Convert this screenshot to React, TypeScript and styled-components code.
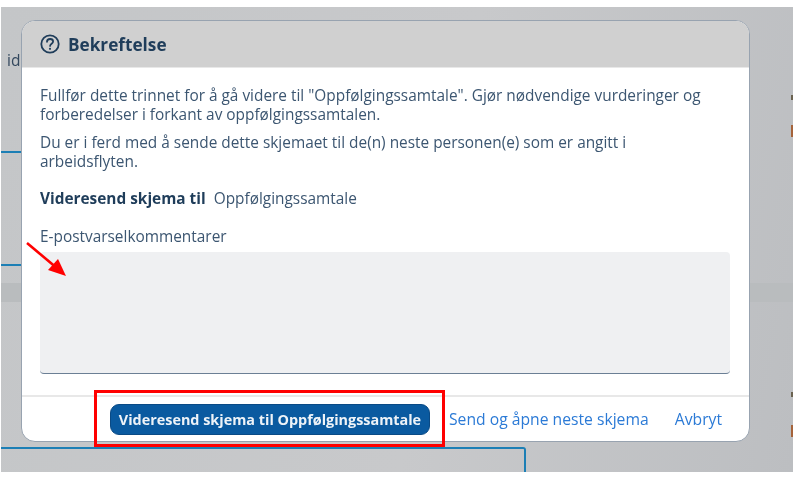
import React from "react";
import styled, { createGlobalStyle } from "styled-components";

const Global = createGlobalStyle`
  html, body { margin: 0; padding: 0; background: #fff; }
  #root { width: 800px; height: 477px; overflow: hidden; }
`;

const Page = styled.div`
  position: relative;
  width: 800px;
  height: 477px;
  background: #fff;
  font-family: "Open Sans", "Noto Sans", sans-serif;
  filter: blur(0.4px);
`;

const Backdrop = styled.div`
  position: absolute;
  left: 1px;
  top: 7px;
  width: 792px;
  height: 465px;
  background: linear-gradient(100deg, #c4c6c8 0%, #c8c9cb 55%, #bcbec1 100%);
  overflow: hidden;
`;

const BackdropLabel = styled.span`
  position: absolute;
  left: 6px;
  top: 42px;
  font-size: 15.5px;
  color: #33485e;
`;

const BackdropLine = styled.div<{ $top: number }>`
  position: absolute;
  left: 0;
  top: ${(p) => p.$top}px;
  width: 24px;
  height: 2px;
  background: #1c7fb5;
`;

const BackdropBand = styled.div`
  position: absolute;
  left: 0;
  right: 0;
  top: 276px;
  height: 19px;
  background: #b9bcbe;
`;

const BackdropFrame = styled.div`
  position: absolute;
  left: 0;
  top: 440px;
  width: 523px;
  height: 40px;
  border: 2px solid #1c7fb5;
  border-left: 0;
  border-top-right-radius: 3px;
`;

const BackdropMark = styled.div<{ $top: number; $color: string; $height: number }>`
  position: absolute;
  right: 0;
  top: ${(p) => p.$top}px;
  width: 2px;
  height: ${(p) => p.$height}px;
  background: ${(p) => p.$color};
`;

const Dialog = styled.div`
  position: absolute;
  left: 21px;
  top: 20px;
  width: 729px;
  height: 422px;
  box-sizing: border-box;
  display: flex;
  flex-direction: column;
  background: #fff;
  border: 1px solid #98a3b0;
  border-radius: 14px;
  overflow: hidden;
`;

const Header = styled.header`
  height: 47px;
  flex: none;
  display: flex;
  align-items: center;
  gap: 8px;
  padding-left: 18px;
  background: #d0d0d0;
  border-bottom: 1px solid #e8e8e8;
  box-sizing: border-box;
`;

const Title = styled.h1`
  margin: 0;
  font-size: 17.2px;
  font-weight: 700;
  color: #1f3d5a;
`;

const Body = styled.div`
  flex: 1;
  display: flex;
  flex-direction: column;
  padding: 19px 19px 0 18px;
  color: #3c5671;
  font-size: 15.4px;
`;

const Paragraph = styled.p`
  margin: 0 0 10px;
  line-height: 18.5px;
`;

const ForwardRow = styled.div`
  margin-top: 7px;
  display: flex;
  gap: 8px;
  line-height: 21px;
`;

const Strong = styled.strong`
  color: #1f3d5a;
  font-weight: 700;
`;

const FieldLabel = styled.label`
  margin-top: 17px;
  line-height: 21px;
`;

const TextArea = styled.div`
  margin-top: 5px;
  height: 121px;
  background: #eff0f2;
  border-bottom: 1px solid #6b7f95;
  border-radius: 4px;
`;

const Footer = styled.footer`
  height: 46px;
  flex: none;
  box-sizing: border-box;
  display: flex;
  align-items: center;
  padding: 0 27px 0 88px;
  border-top: 2px solid #e8e8e8;
`;

const PrimaryButton = styled.button`
  height: 31px;
  padding: 0;
  width: 320px;
  border: 1px solid #0a4a85;
  border-radius: 9px;
  background: #0a5aa0;
  color: #eef3f8;
  font: 700 14.4px "Open Sans", "Noto Sans", sans-serif;
`;

const LinkButton = styled.button`
  border: 0;
  padding: 0;
  background: none;
  color: #2b7ad6;
  font: 500 15.7px "Open Sans", "Noto Sans", sans-serif;
`;

const Links = styled.div`
  margin-left: 19px;
  flex: 1;
  display: flex;
  justify-content: space-between;
`;

const RedBox = styled.div`
  position: absolute;
  left: 94px;
  top: 390px;
  width: 351px;
  height: 57px;
  box-sizing: border-box;
  border: 3px solid #f00;
`;

const Arrow = styled.svg`
  position: absolute;
  left: 20px;
  top: 236px;
`;

const HelpIcon = () => (
  <svg width="20" height="20" viewBox="0 0 20 20" fill="none" stroke="#1f3d5a" strokeWidth="1.8">
    <circle cx="10" cy="10" r="8.7" />
    <path d="M7 7.8c0-1.7 1.3-2.8 3.1-2.8 1.7 0 3 1 3 2.5 0 2.3-3 2.2-3 4.4" strokeLinecap="round" />
    <circle cx="10" cy="14.8" r="1.1" fill="#1f3d5a" stroke="none" />
  </svg>
);

export default function App() {
  return (
    <Page>
      <Global />
      <Backdrop>
        <BackdropLabel>id</BackdropLabel>
        <BackdropLine $top={144} />
        <BackdropLine $top={257} />
        <BackdropBand />
        <BackdropFrame />
        <BackdropMark $top={88} $height={5} $color="#6a6250" />
        <BackdropMark $top={118} $height={12} $color="#a5633a" />
        <BackdropMark $top={385} $height={5} $color="#6a6250" />
        <BackdropMark $top={418} $height={12} $color="#a5633a" />
      </Backdrop>
      <Dialog>
        <Header>
          <HelpIcon />
          <Title>Bekreftelse</Title>
        </Header>
        <Body>
          <Paragraph>
            Fullfør dette trinnet for å gå videre til "Oppfølgingssamtale". Gjør nødvendige vurderinger og
            <br />
            forberedelser i forkant av oppfølgingssamtalen.
          </Paragraph>
          <Paragraph>
            Du er i ferd med å sende dette skjemaet til de(n) neste personen(e) som er angitt i
            <br />
            arbeidsflyten.
          </Paragraph>
          <ForwardRow>
            <Strong>Videresend skjema til</Strong>
            <span>Oppfølgingssamtale</span>
          </ForwardRow>
          <FieldLabel>E-postvarselkommentarer</FieldLabel>
          <TextArea />
        </Body>
        <Footer>
          <PrimaryButton>Videresend skjema til Oppfølgingssamtale</PrimaryButton>
          <Links>
            <LinkButton>Send og åpne neste skjema</LinkButton>
            <LinkButton>Avbryt</LinkButton>
          </Links>
        </Footer>
      </Dialog>
      <RedBox />
      <Arrow width="50" height="46" viewBox="0 0 50 46">
        <path d="M7 7 L38 33" stroke="#f00" strokeWidth="2.6" />
        <path d="M46 40 L28 34 L38 23 Z" fill="#f00" />
      </Arrow>
    </Page>
  );
}
